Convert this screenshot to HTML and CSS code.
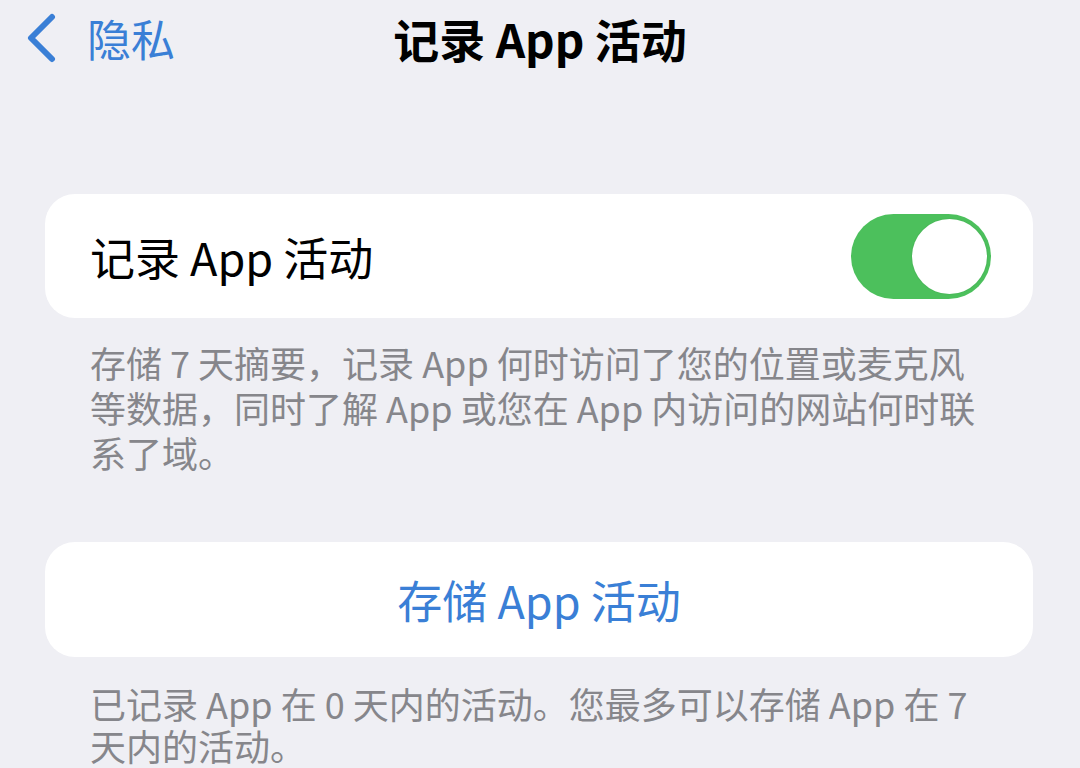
FILE: index.html
```html
<!DOCTYPE html>
<html lang="zh-CN">
<head>
<meta charset="utf-8">
<title>记录 App 活动</title>
<link rel="stylesheet" href="styles.css">
</head>
<body>
<header class="nav">
  <div class="back">
    <svg class="chevron" viewBox="0 0 32 50" width="32" height="50"><path d="M27 4 L6 25 L27 46" fill="none" stroke="#3a7fd6" stroke-width="6" stroke-linecap="round" stroke-linejoin="round"/></svg>
    <span class="back-label">隐私</span>
  </div>
  <h1 class="title">记录 App 活动</h1>
  <div></div>
</header>

<section class="group first">
  <div class="card row">
    <span class="row-label">记录 App 活动</span>
    <span class="toggle on"><span class="knob"></span></span>
  </div>
  <p class="footer">存储 7 天摘要，记录 App 何时访问了您的位置或麦克风<br>等数据，同时了解 App 或您在 App 内访问的网站何时联<br>系了域。</p>
</section>

<section class="group second">
  <div class="card action">
    <span class="action-label">存储 App 活动</span>
  </div>
  <p class="footer tight">已记录 App 在 0 天内的活动。您最多可以存储 App 在 7<br>天内的活动。</p>
</section>
</body>
</html>
```
FILE: styles.css
```css
* { box-sizing: border-box; }
html, body { margin: 0; padding: 0; }
body {
  width: 1080px;
  height: 768px;
  overflow: hidden;
  background: #efeff4;
  font-family: "Noto Sans CJK SC", "Noto Sans", sans-serif;
  color: #000;
}
.nav {
  display: grid;
  grid-template-columns: 1fr auto 1fr;
  align-items: center;
  height: 76px;
  padding: 0 25px;
}
.back {
  display: flex;
  align-items: center;
  gap: 30px;
}
.chevron { display: block; }
.back-label {
  font-size: 44px;
  color: #3a7fd6;
  line-height: 1;
}
.title {
  margin: 0;
  font-size: 46px;
  font-weight: 700;
  line-height: 1;
}
.group {
  padding: 0 47px 0 45px;
}
.group.first { margin-top: 118px; }
.group.second { margin-top: 67px; }
.card {
  background: #fff;
  border-radius: 30px;
  display: flex;
  align-items: center;
}
.row {
  height: 124px;
  padding: 0 42px 0 45px;
  justify-content: space-between;
}
.row-label {
  font-size: 45px;
  line-height: 1;
}
.toggle {
  width: 140px;
  height: 85px;
  border-radius: 43px;
  background: #4cc05c;
  position: relative;
  display: block;
}
.knob {
  position: absolute;
  right: 4px;
  top: 5px;
  width: 75px;
  height: 75px;
  border-radius: 50%;
  background: #fff;
  box-shadow: 0 0 0 1px rgba(0,0,0,0.04);
}
.action {
  height: 115px;
  justify-content: center;
}
.action-label {
  font-size: 45px;
  color: #3a7fd6;
  line-height: 1;
}
.footer {
  margin: 22px 0 0;
  padding-left: 45px;
  font-size: 36px;
  line-height: 45px;
  color: #86868b;
}
.footer.tight {
  margin-top: 25px;
  line-height: 42px;
}
```
